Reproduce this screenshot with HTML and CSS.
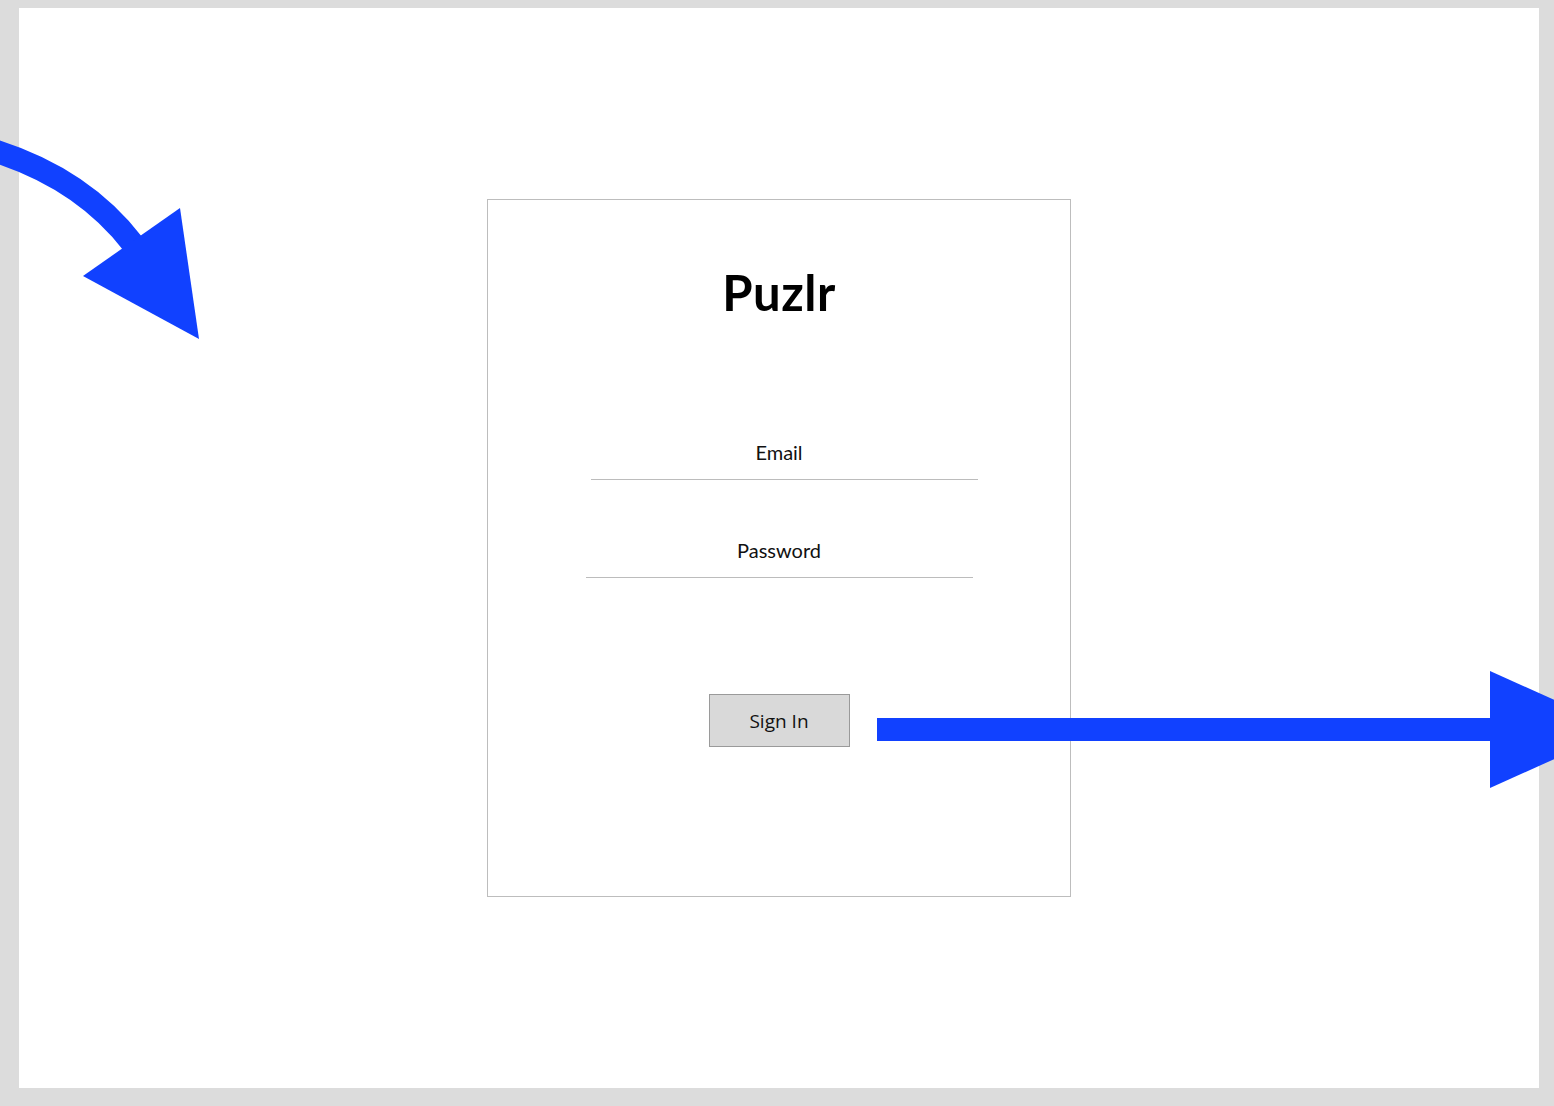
FILE: index.html
```html
<!DOCTYPE html>
<html lang="en">
<head>
<meta charset="utf-8">
<title>Puzlr – Sign In</title>
<link rel="stylesheet" href="styles.css">
</head>
<body>
<div class="canvas">
  <form class="card">
    <h1 class="title">Puzlr</h1>
    <div class="field field-email"><span class="label">Email</span></div>
    <div class="field field-password"><span class="label">Password</span></div>
    <button type="button" class="btn">Sign In</button>
  </form>
</div>
<svg class="arrows" width="1554" height="1106" viewBox="0 0 1554 1106" xmlns="http://www.w3.org/2000/svg">
  <path d="M -30 144 Q 76 170 133 244" fill="none" stroke="#1141ff" stroke-width="23"/>
  <polygon points="180,208 83,276 199,339" fill="#1141ff"/>
  <rect x="877" y="718" width="620" height="23" fill="#1141ff"/>
  <polygon points="1490,671 1620,729.5 1490,788" fill="#1141ff"/>
</svg>
</body>
</html>
```

FILE: styles.css
```css
html, body {
  margin: 0;
  padding: 0;
}
body {
  background: #dcdcdc;
  width: 1554px;
  height: 1106px;
  overflow: hidden;
  position: relative;
  font-family: "Lato", "Open Sans", sans-serif;
  color: #111;
}
.canvas {
  margin: 8px 15px 0 19px;
  width: 1520px;
  height: 1080px;
  background: #fff;
  display: flex;
  align-items: center;
  justify-content: center;
}
.card {
  box-sizing: border-box;
  width: 584px;
  height: 698px;
  border: 1px solid #bdbdbd;
  display: flex;
  flex-direction: column;
  align-items: center;
  margin: 0;
}
.title {
  margin: 62px 0 0 0;
  font-size: 49px;
  font-weight: 700;
  line-height: 60px;
  letter-spacing: 0.5px;
  color: #000;
}
.field {
  width: 387px;
  border-bottom: 1px solid #bcbcbc;
  text-align: center;
  box-sizing: border-box;
  height: 40px;
}
.field-email {
  margin-top: 118px;
  margin-left: 11px;
}
.field-password {
  margin-top: 58px;
}
.label {
  font-size: 20px;
  line-height: 24px;
  color: #111;
  display: inline-block;
}
.field-email .label {
  margin-left: -11px;
}
.btn {
  margin-top: 116px;
  width: 141px;
  height: 53px;
  box-sizing: border-box;
  background: #d9d9d9;
  border: 1px solid #9a9a9a;
  border-radius: 0;
  font-family: "Open Sans", "Noto Sans", sans-serif;
  font-size: 19px;
  color: #111;
  padding: 0;
}
.arrows {
  position: absolute;
  left: 0;
  top: 0;
  pointer-events: none;
}
```
